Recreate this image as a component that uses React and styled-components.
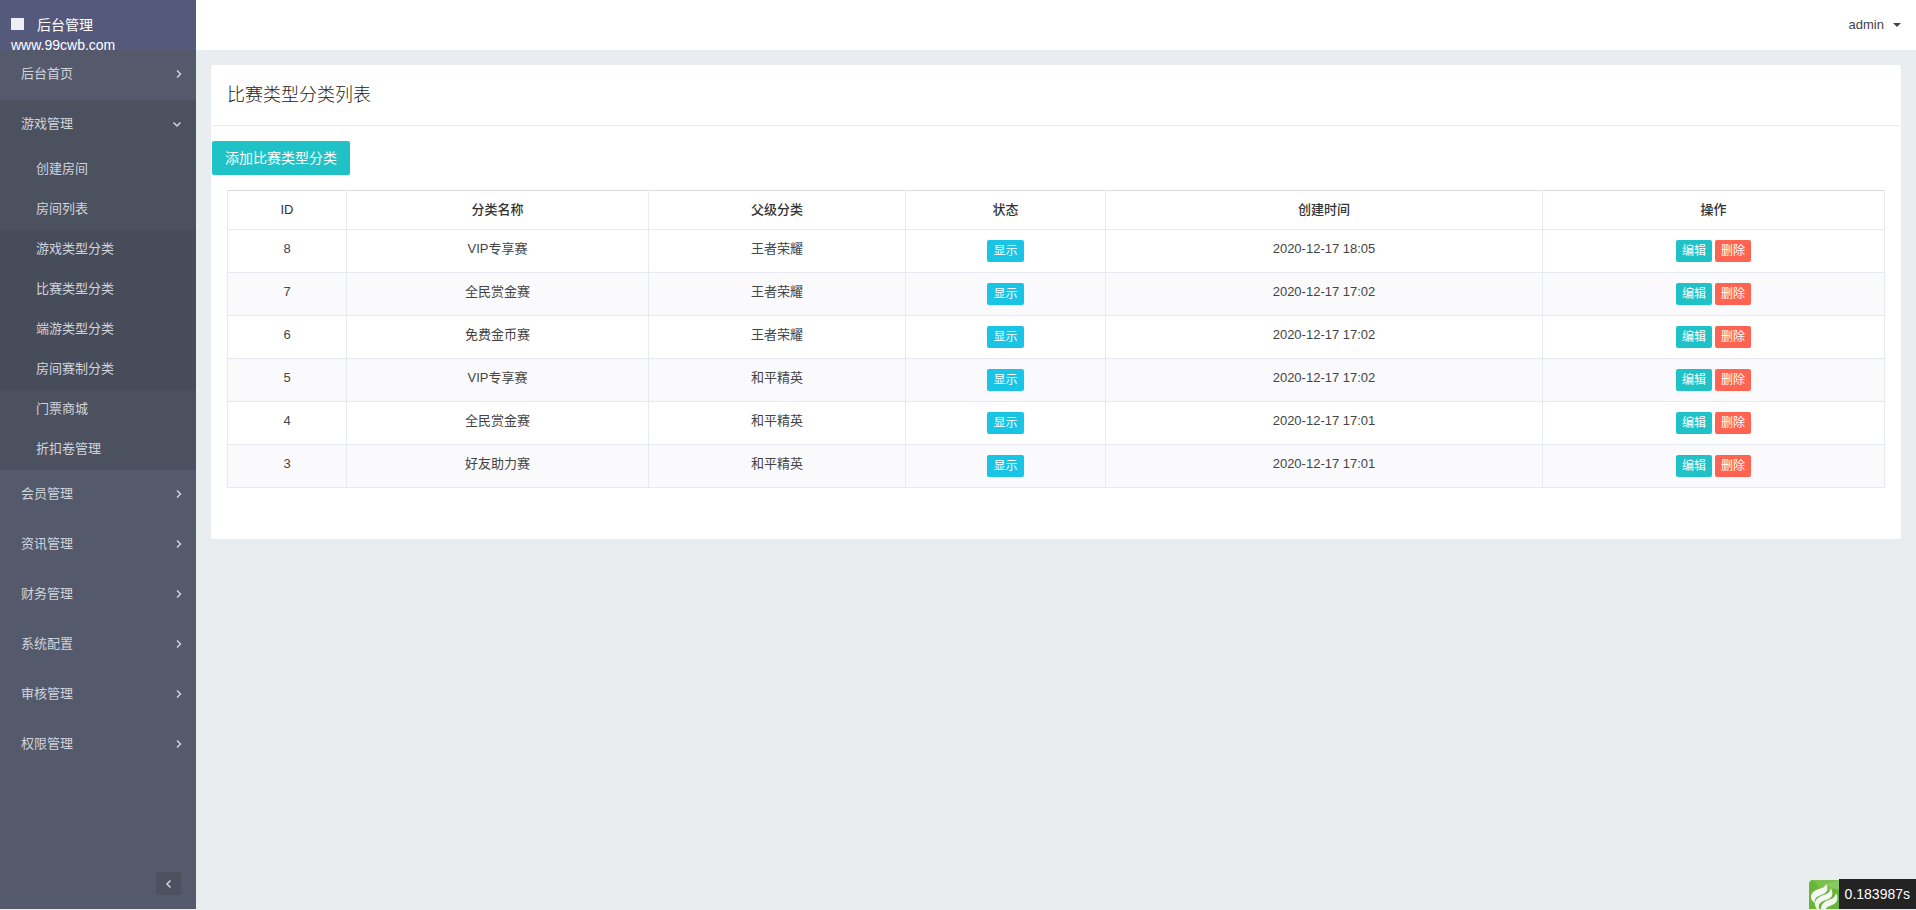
import React, { Component } from 'react';
import styled, { createGlobalStyle } from 'styled-components';

const menuBefore = ['后台首页'];
const subMenu = [
    { title: '创建房间' },
    { title: '房间列表' },
    { title: '游戏类型分类', nested: true },
    { title: '比赛类型分类', nested: true },
    { title: '端游类型分类', nested: true },
    { title: '房间赛制分类', nested: true },
    { title: '门票商城' },
    { title: '折扣卷管理' },
];
const menuAfter = ['会员管理', '资讯管理', '财务管理', '系统配置', '审核管理', '权限管理'];

const rows = [
    { id: 8, name: 'VIP专享赛', parent: '王者荣耀', time: '2020-12-17 18:05' },
    { id: 7, name: '全民赏金赛', parent: '王者荣耀', time: '2020-12-17 17:02' },
    { id: 6, name: '免费金币赛', parent: '王者荣耀', time: '2020-12-17 17:02' },
    { id: 5, name: 'VIP专享赛', parent: '和平精英', time: '2020-12-17 17:02' },
    { id: 4, name: '全民赏金赛', parent: '和平精英', time: '2020-12-17 17:01' },
    { id: 3, name: '好友助力赛', parent: '和平精英', time: '2020-12-17 17:01' },
];

const Arrow = ({ d }) => (
    <ArrowIcon viewBox='0 0 10 10' aria-hidden='true'>
        <path d={d} />
    </ArrowIcon>
);
const RIGHT = 'M5 1.5 L8.5 5 L5 8.5';
const DOWN = 'M1.5 3.5 L5 7 L8.5 3.5';
const LEFT = 'M6.5 1.5 L3 5 L6.5 8.5';

class Sidebar extends Component {
    render() {
        return (
            <SidebarWrapper>
                <Brand href='#'>
                    <BrandSquare />
                    后台管理 www.99cwb.com
                </Brand>
                <nav>
                    {menuBefore.map(title => (
                        <MenuLink href='#' key={title}>{title}<Arrow d={RIGHT} /></MenuLink>
                    ))}
                    <OpenMenu>
                        <MenuLink href='#'>游戏管理<Arrow d={DOWN} /></MenuLink>
                        {subMenu.map(item => (
                            <SubLink href='#' key={item.title} $nested={item.nested}>{item.title}</SubLink>
                        ))}
                    </OpenMenu>
                    {menuAfter.map(title => (
                        <MenuLink href='#' key={title}>{title}<Arrow d={RIGHT} /></MenuLink>
                    ))}
                </nav>
                <FoldButton type='button' aria-label='收起'><Arrow d={LEFT} /></FoldButton>
            </SidebarWrapper>
        )
    }
}

class CategoryTable extends Component {
    render() {
        return (
            <Table>
                <colgroup>
                    <Col $share={119} />
                    <Col $share={302} />
                    <Col $share={257} />
                    <Col $share={200} />
                    <Col $share={437} />
                    <Col $share={342} />
                </colgroup>
                <thead>
                    <tr>
                        <th>ID</th>
                        <th>分类名称</th>
                        <th>父级分类</th>
                        <th>状态</th>
                        <th>创建时间</th>
                        <th>操作</th>
                    </tr>
                </thead>
                <tbody>
                    {rows.map(row => (
                        <tr key={row.id}>
                            <td>{row.id}</td>
                            <td>{row.name}</td>
                            <td>{row.parent}</td>
                            <td><Actions><SmallButton $color='#19c4e5'>显示</SmallButton></Actions></td>
                            <td>{row.time}</td>
                            <td>
                                <Actions>
                                    <SmallButton $color='#1fc3c7'>编辑</SmallButton>
                                    <SmallButton $color='#ff6352'>删除</SmallButton>
                                </Actions>
                            </td>
                        </tr>
                    ))}
                </tbody>
            </Table>
        )
    }
}

const TraceBar = () => (
    <Trace>
        <TraceLogo viewBox='0 0 30 29' aria-hidden='true'>
            <path d='M0 29 V4 Q0 0 4 0 H30 V29 Z' fill='#69b637' />
            <path d='M4 0 H30 V7 L15 13 Z' fill='#7cc04c' />
            <path d='M30 0 V10 L15 5 Z' fill='#8cc963' />
            <path d='M17 4 C20 9 18 13 12 15 C7 17 5 19 6 23 C0 19 1 13 7 10 C12 8 16 8 17 4 Z' fill='#f4f6f2' />
            <path d='M22 8 C25 15 23 18 17 20 C11 22 9 24 10 29 H8 C4 24 6 19 12 16 C18 14 21 13 22 8 Z' fill='#f4f6f2' />
            <path d='M27 13 C30 19 28 23 23 25 C19 27 17 27 17 29 H12 C12 25 14 23 17 21 C23 19 26 18 27 13 Z' fill='#f4f6f2' />
        </TraceLogo>
        <TraceTime>0.183987s</TraceTime>
    </Trace>
);

export default class App extends Component {
    render() {
        return (
            <Page>
                <GlobalStyle />
                <Sidebar />
                <Content>
                    <TopBar>
                        <UserMenu type='button'>admin<Caret /></UserMenu>
                    </TopBar>
                    <Main>
                        <Card>
                            <CardTitle>比赛类型分类列表</CardTitle>
                            <CardBody>
                                <AddButton type='button'>添加比赛类型分类</AddButton>
                                <CategoryTable />
                            </CardBody>
                        </Card>
                    </Main>
                </Content>
                <TraceBar />
            </Page>
        )
    }
}

const GlobalStyle = createGlobalStyle`
*{
    box-sizing:border-box;
}
body{
    margin:0;
    background:#e9edf0;
    color:#444;
    font:13px/22px "Liberation Sans", "Noto Sans CJK SC", sans-serif;
}
a{
    color:inherit;
    text-decoration:none;
}
button{
    border:0;
    font:inherit;
    color:inherit;
    cursor:pointer;
}
`

const Page = styled.div`
display:flex;
min-height:calc(100vh - 1px);
`

const SidebarWrapper = styled.aside`
display:flex;
flex-direction:column;
flex:none;
width:196px;
background:#545a6c;
color:#d0d4dc;
`

const Brand = styled.a`
display:block;
height:50px;
padding:15px 11px 0;
background:#555a7c;
color:#fff;
font-size:14px;
line-height:20px;
`

const BrandSquare = styled.span`
display:inline-block;
width:13px;
height:12px;
margin-right:13px;
background:#eeeff4;
`

const ArrowIcon = styled.svg`
width:10px;
height:10px;
fill:none;
stroke:currentColor;
stroke-width:1.5;
`

const MenuLink = styled.a`
display:flex;
align-items:center;
justify-content:space-between;
height:50px;
padding:0 14px 2px 21px;
`

const OpenMenu = styled.div`
background:#4c5160;
`

const SubLink = styled.a`
display:block;
padding:8px 36px 10px;
background:${props => (props.$nested ? '#474c5b' : 'transparent')};
`

const FoldButton = styled.button`
display:flex;
align-items:center;
justify-content:center;
align-self:flex-end;
width:25px;
height:23px;
margin:auto 15px 14px 0;
padding:0;
border-radius:2px;
background:#4c5160;
`

const Content = styled.div`
flex:1;
min-width:0;
`

const TopBar = styled.header`
display:flex;
align-items:center;
justify-content:flex-end;
height:50px;
padding:0 15px;
background:#fff;
`

const UserMenu = styled.button`
display:flex;
align-items:center;
gap:9px;
padding:0;
background:none;
`

const Caret = styled.span`
border:4px solid transparent;
border-top-color:#444;
border-bottom:0;
`

const Main = styled.main`
padding:15px;
`

const Card = styled.section`
padding:0 1px 51px;
border-radius:2px;
background:#fff;
`

const CardTitle = styled.h1`
margin:0;
padding:18px 15px;
border-bottom:1px solid #e9ebf2;
color:#222;
font-size:18px;
font-weight:300;
line-height:24px;
`

const CardBody = styled.div`
padding-top:15px;
`

const AddButton = styled.button`
display:block;
height:34px;
margin-bottom:15px;
padding:0 13px;
border-radius:2px;
background:#1fc3c7;
color:#fff;
font-size:14px;
`

const Table = styled.table`
width:calc(100% - 30px);
margin:0 15px;
border-collapse:collapse;
table-layout:fixed;
text-align:center;
th,td{
    padding:8px;
    border:1px solid #e7eaf1;
    vertical-align:top;
}
th{
    border-top-color:#dcdddf;
    font-weight:500;
    color:#333;
}
tbody tr:nth-child(even){
    background:#fafafc;
}
`

const Col = styled.col`
width:${props => props.$share / 16.57}%;
`

const Actions = styled.div`
display:flex;
justify-content:center;
gap:3px;
padding:2px 0;
`

const SmallButton = styled.button`
height:22px;
padding:0 6px;
border-radius:2px;
background:${props => props.$color};
color:#fff;
font-size:12px;
line-height:20px;
`

const Trace = styled.div`
display:flex;
position:fixed;
right:0;
bottom:1px;
height:30px;
`

const TraceLogo = styled.svg`
width:30px;
height:29px;
margin-top:1px;
`

const TraceTime = styled.span`
padding:0 6px;
background:#232323;
color:#fff;
font-size:14px;
line-height:30px;
`
